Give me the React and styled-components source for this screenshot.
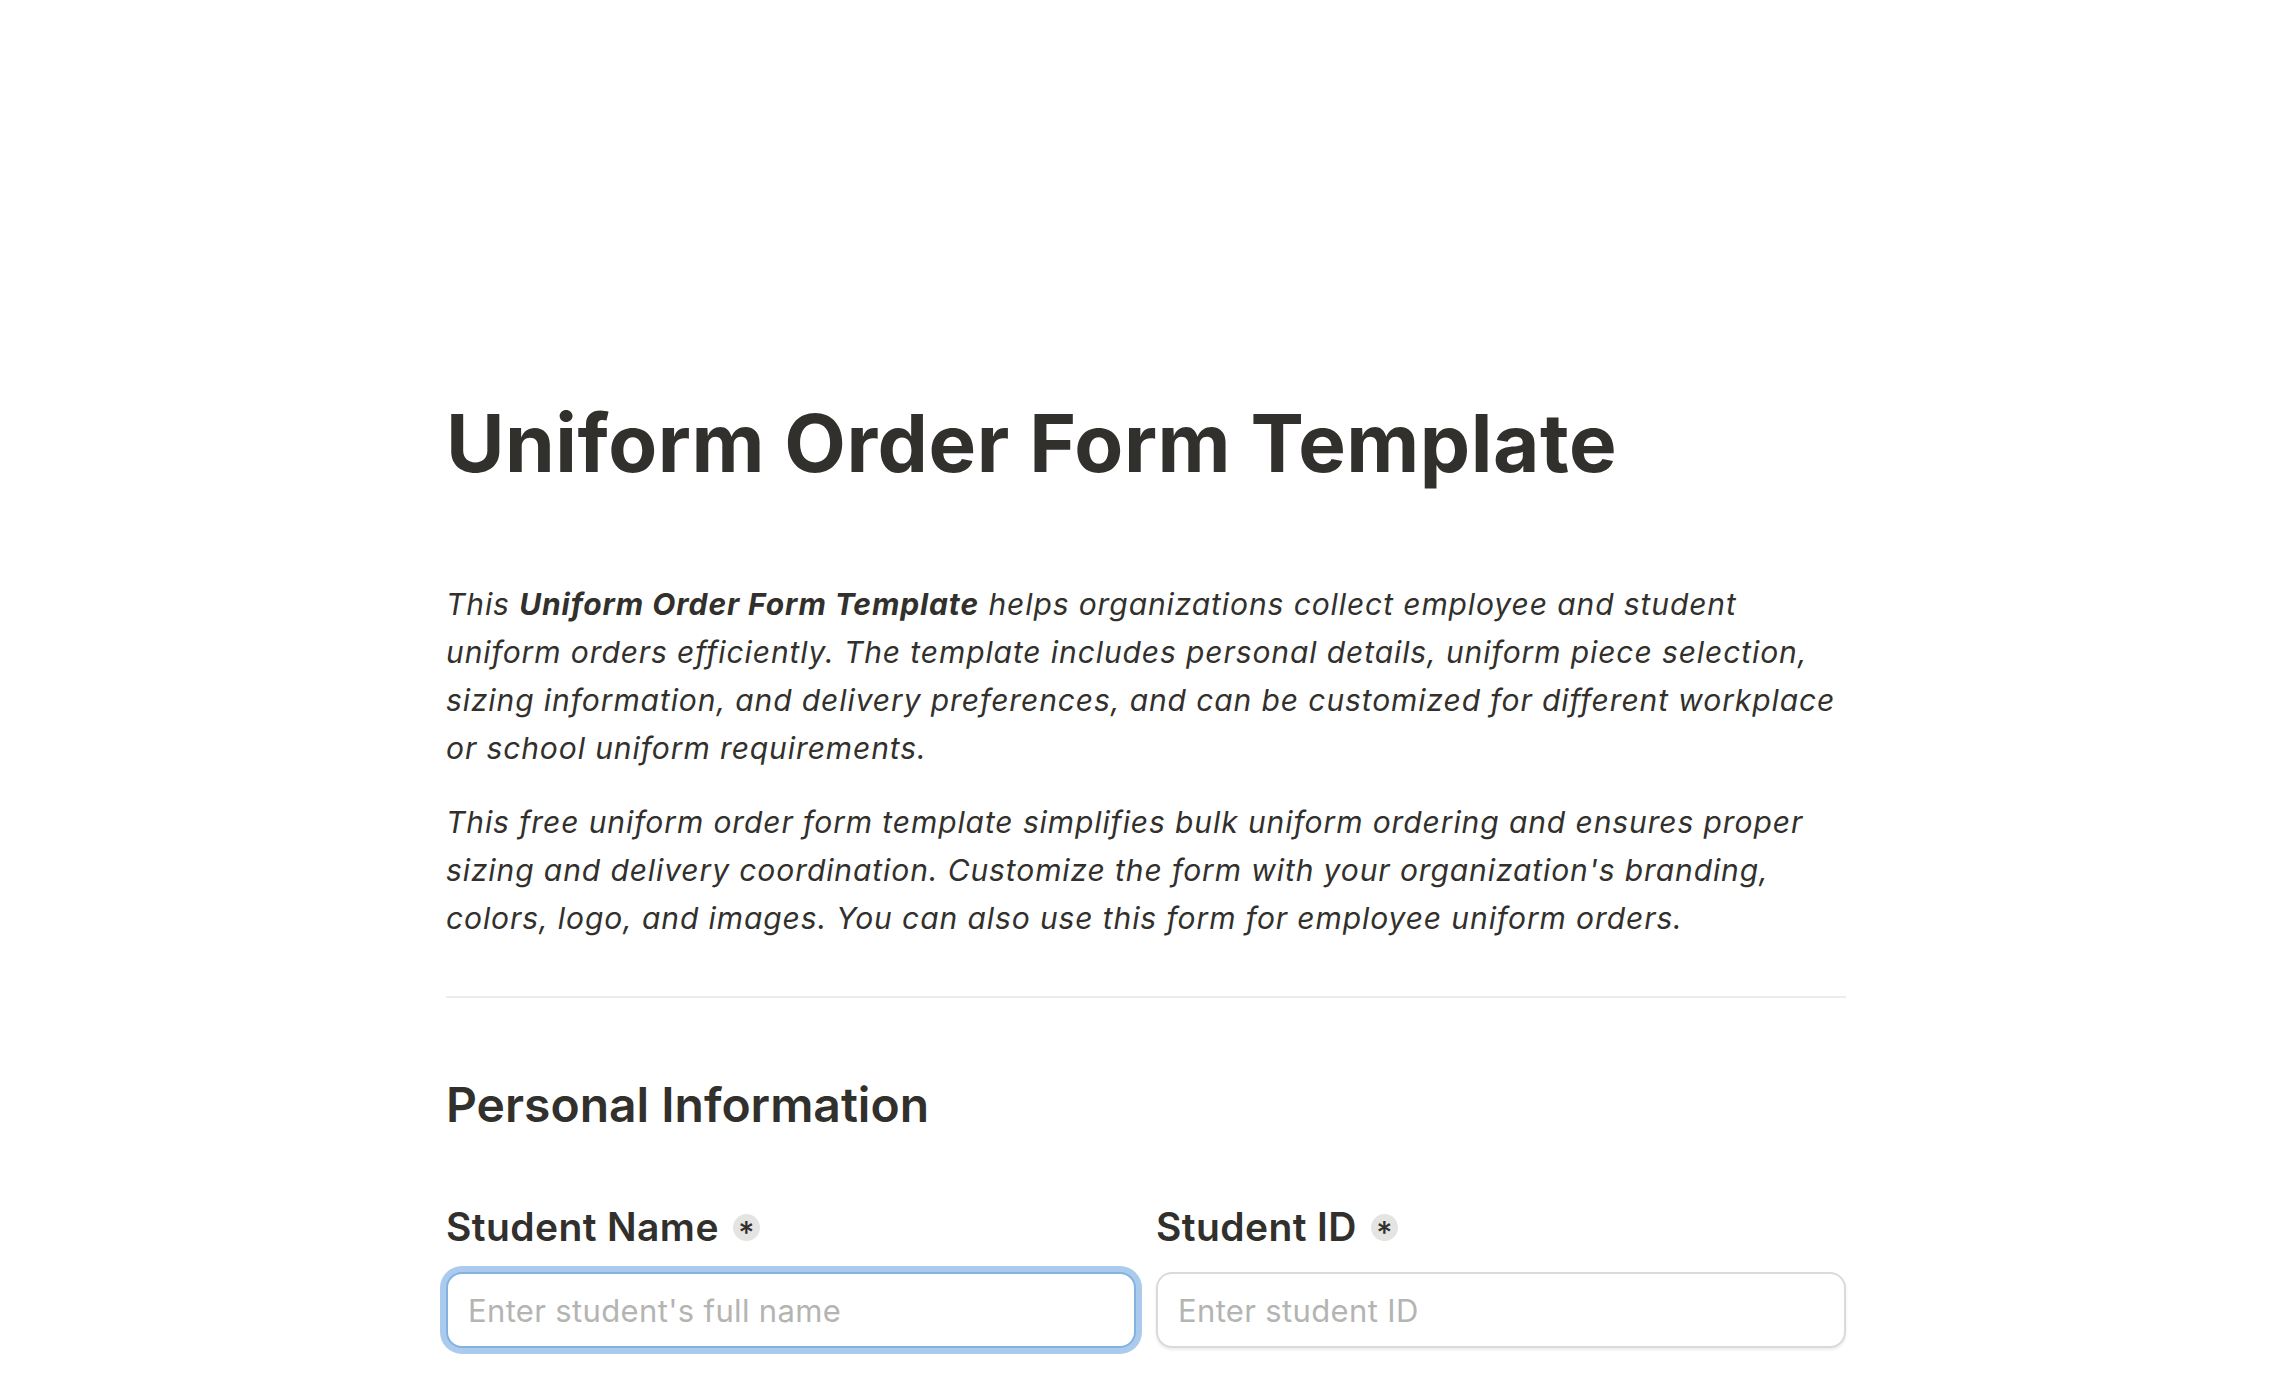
import React from "react";
import styled, { createGlobalStyle, css } from "styled-components";

const GlobalStyle = createGlobalStyle`
  html, body {
    margin: 0;
    padding: 0;
    background: #ffffff;
  }
  body {
    font-family: Inter, "Noto Sans", "Liberation Sans", sans-serif;
    color: #32302c;
    -webkit-font-smoothing: antialiased;
  }
  * { box-sizing: border-box; }
`;

const Page = styled.main`
  width: 1400px;
  margin: 0 auto;
  padding: 395px 0 120px;
`;

const Title = styled.h1`
  margin: 0;
  font-size: 80px;
  line-height: 96px;
  font-weight: 700;
  letter-spacing: 0.5px;
  color: #32302c;
`;

const Description = styled.div`
  margin-top: 89px;
  display: flex;
  flex-direction: column;
  gap: 26px;
`;

const Paragraph = styled.p`
  margin: 0;
  font-size: 30px;
  line-height: 48px;
  font-style: italic;
  font-weight: 400;
  letter-spacing: 0.9px;
  color: #32302c;

  strong {
    font-weight: 700;
  }
`;

const Divider = styled.hr`
  margin: 54px 0 0;
  border: 0;
  height: 2px;
  background: #ededec;
`;

const SectionHeading = styled.h2`
  margin: 76px 0 0;
  font-size: 48px;
  line-height: 62px;
  font-weight: 600;
  color: #32302c;
`;

const FieldGrid = styled.div`
  margin-top: 67px;
  display: grid;
  grid-template-columns: 1fr 1fr;
  column-gap: 20px;
`;

const Field = styled.div`
  display: flex;
  flex-direction: column;
  gap: 22px;
`;

const LabelRow = styled.div`
  display: flex;
  align-items: center;
  gap: 14px;
`;

const Label = styled.label`
  font-size: 39px;
  line-height: 47px;
  font-weight: 600;
  letter-spacing: 0.4px;
  color: #32302c;
`;

const RequiredBadge = styled.span`
  width: 27px;
  height: 27px;
  border-radius: 50%;
  background: #e4e4e3;
  color: #32302c;
  display: inline-flex;
  align-items: center;
  justify-content: center;
  font-size: 31px;
  line-height: 1;
  font-weight: 500;
  padding-top: 9px;
  margin-top: 2px;
`;

const Input = styled.input`
  width: 100%;
  height: 76px;
  padding: 0 20px;
  border-radius: 16px;
  font-family: Inter, "Noto Sans", "Liberation Sans", sans-serif;
  font-size: 31px;
  letter-spacing: 0.35px;
  color: #32302c;
  background: #ffffff;
  outline: none;
  border: 2px solid #dadad9;
  box-shadow: 0 2px 3px rgba(15, 15, 15, 0.08);

  &::placeholder {
    color: #b4b4b2;
  }

  ${(p) =>
    p.$focused &&
    css`
      border-color: #85b1e1;
      box-shadow: 0 0 0 6px #aacbee;
    `}
`;

export default function App() {
  return (
    <>
      <GlobalStyle />
      <Page>
        <Title>Uniform Order Form Template</Title>
        <Description>
          <Paragraph>
            This <strong>Uniform Order Form Template</strong> helps organizations
            collect employee and student
            <br />
            uniform orders efficiently. The template includes personal details,
            uniform piece selection,
            <br />
            sizing information, and delivery preferences, and can be customized
            for different workplace
            <br />
            or school uniform requirements.
          </Paragraph>
          <Paragraph>
            This free uniform order form template simplifies bulk uniform ordering
            and ensures proper
            <br />
            sizing and delivery coordination. Customize the form with your
            organization's branding,
            <br />
            colors, logo, and images. You can also use this form for employee
            uniform orders.
          </Paragraph>
        </Description>
        <Divider />
        <SectionHeading>Personal Information</SectionHeading>
        <FieldGrid>
          <Field>
            <LabelRow>
              <Label htmlFor="student-name">Student Name</Label>
              <RequiredBadge>*</RequiredBadge>
            </LabelRow>
            <Input
              id="student-name"
              $focused
              placeholder="Enter student's full name"
            />
          </Field>
          <Field>
            <LabelRow>
              <Label htmlFor="student-id">Student ID</Label>
              <RequiredBadge>*</RequiredBadge>
            </LabelRow>
            <Input id="student-id" placeholder="Enter student ID" />
          </Field>
        </FieldGrid>
      </Page>
    </>
  );
}
